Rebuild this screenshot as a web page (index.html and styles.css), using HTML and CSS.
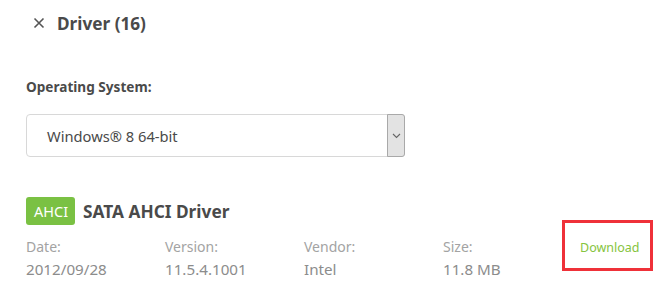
FILE: index.html
```html
<!DOCTYPE html>
<html lang="en">

<head>
    <meta charset="UTF-8" />
    <title>Driver</title>
    <link rel="stylesheet" href="styles.css">
</head>

<body>

    <div class="panel">
        <!-- Cabeçalho -->
        <div class="panel-head">
            <svg class="close-icon" width="12" height="12" viewBox="0 0 12 12">
                <path d="M1.5 1.5 L10.5 10.5 M10.5 1.5 L1.5 10.5" stroke="#555" stroke-width="1.6" fill="none" />
            </svg>
            <h2>Driver (16)</h2>
        </div>

        <!-- Sistema operacional -->
        <div class="os-label">Operating System:</div>
        <div class="os-select">
            <span class="os-value">Windows® 8 64-bit</span>
            <span class="os-arrow">
                <svg width="9" height="6" viewBox="0 0 9 6">
                    <path d="M1 1 L4.5 4.5 L8 1" stroke="#666" stroke-width="1.1" fill="none" />
                </svg>
            </span>
        </div>

        <!-- Driver -->
        <div class="driver">
            <div class="driver-title">
                <span class="badge">AHCI</span>
                <h3>SATA AHCI Driver</h3>
            </div>
            <div class="driver-info">
                <div class="info-col">
                    <span class="info-label">Date:</span>
                    <span class="info-value">2012/09/28</span>
                </div>
                <div class="info-col">
                    <span class="info-label">Version:</span>
                    <span class="info-value">11.5.4.1001</span>
                </div>
                <div class="info-col">
                    <span class="info-label">Vendor:</span>
                    <span class="info-value">Intel</span>
                </div>
                <div class="info-col">
                    <span class="info-label">Size:</span>
                    <span class="info-value">11.8 MB</span>
                </div>
                <div class="info-col download-col">
                    <a href="#" class="download">Download</a>
                    <span class="highlight"></span>
                </div>
            </div>
        </div>
    </div>

</body>

</html>
```

FILE: styles.css
```css
body {
    font-family: "Noto Sans", sans-serif;
    margin: 0;
    background: #fff;
    color: #4a4a4a;
}

.panel {
    padding: 12px 0 0 26px;
}

/* Cabeçalho */
.panel-head {
    display: flex;
    align-items: center;
    gap: 12px;
    padding-left: 7px;
    height: 22px;
}

.panel-head h2 {
    margin: 0;
    font-size: 17.2px;
    font-weight: 700;
    color: #4a4a4a;
}

/* Sistema operacional */
.os-label {
    margin-top: 43px;
    font-size: 13.6px;
    font-weight: 700;
    color: #4a4a4a;
}

.os-select {
    display: flex;
    align-items: stretch;
    width: 377px;
    height: 41px;
    margin-top: 18px;
    border: 1px solid #d8d8d8;
    border-radius: 4px;
}

.os-value {
    flex: 1;
    display: flex;
    align-items: center;
    padding-left: 20px;
    font-size: 14.7px;
    color: #4a4a4a;
}

.os-arrow {
    width: 16px;
    display: flex;
    align-items: center;
    justify-content: center;
    background: #e3e3e3;
    border: 1px solid #a9a9a9;
    border-radius: 0 3px 3px 0;
    margin: -1px -1px -1px 0;
}

/* Driver */
.driver {
    margin-top: 40px;
}

.driver-title {
    display: flex;
    align-items: center;
    gap: 8px;
}

.badge {
    background: #7ac143;
    color: #fff;
    font-size: 14.5px;
    padding: 0 8px;
    height: 28px;
    line-height: 28px;
    border-radius: 3px;
    width: 33px;
    text-align: center;
}

.driver-title h3 {
    margin: 0;
    font-size: 17.3px;
    font-weight: 700;
    color: #4a4a4a;
}

.driver-info {
    display: grid;
    grid-template-columns: repeat(4, 139px) 1fr;
    margin-top: 12px;
}

.info-col {
    display: flex;
    flex-direction: column;
    gap: 3px;
    position: relative;
}

.info-label {
    font-size: 14px;
    color: #a3a3a3;
}

.info-value {
    font-size: 15.2px;
    color: #8c8c8c;
}

.download {
    font-size: 12.5px;
    color: #86c440;
    text-decoration: none;
    line-height: 19px;
    margin-top: 1px;
    margin-left: -2px;
}

/* Marcação vermelha */
.highlight {
    position: absolute;
    left: -20px;
    top: -17px;
    width: 85px;
    height: 45px;
    border: 3px solid #ef3139;
}
```
